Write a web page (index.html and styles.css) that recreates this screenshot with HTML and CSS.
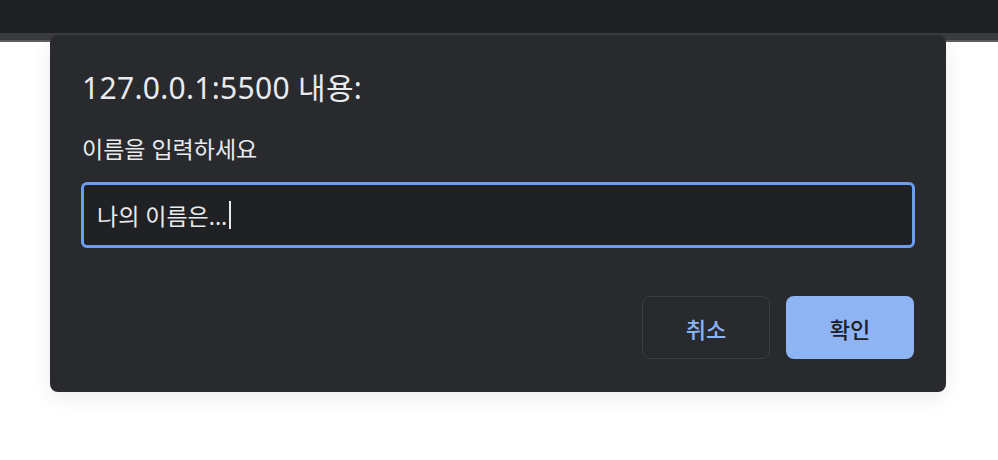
FILE: index.html
```html
<!DOCTYPE html>
<html lang="ko">
<head>
    <meta charset="utf-8">
    <title>127.0.0.1:5500</title>
    <link rel="stylesheet" href="styles.css">
</head>
<body>
    <div class="toolbar"></div>
    <div class="toolbar-edge"></div>

    <div class="dialog">
        <h2 class="dialog-title">127.0.0.1:5500 내용:</h2>
        <p class="dialog-message">이름을 입력하세요</p>
        <div class="prompt-input">나의 이름은...<span class="caret"></span></div>
        <div class="dialog-buttons">
            <button class="btn btn-cancel">취소</button>
            <button class="btn btn-ok">확인</button>
        </div>
    </div>
</body>
</html>
```

FILE: styles.css
```css
* {
    margin: 0;
    padding: 0;
    box-sizing: border-box;
}
body {
    background: #fff;
    font-family: "Noto Sans", "Noto Sans CJK KR", sans-serif;
    color: #e8eaed;
}
.toolbar {
    height: 33px;
    background: #202124;
}
.toolbar-edge {
    height: 9px;
    background: #3a3b3e;
    border-bottom: 2px solid #5c5d60;
}
.dialog {
    position: absolute;
    top: 35px;
    left: 50px;
    width: 896px;
    height: 357px;
    background: #292a2d;
    border-radius: 8px;
    padding: 36px 32px 33px 32px;
    display: flex;
    flex-direction: column;
    box-shadow: 0 6px 20px rgba(0, 0, 0, 0.08);
}
.dialog-title {
    font-size: 30px;
    font-weight: 400;
    line-height: 34px;
    letter-spacing: 0.3px;
}
.dialog-message {
    margin-top: 29px;
    font-size: 23px;
    line-height: 30px;
}
.prompt-input {
    margin: 18px -1px 0 -1px;
    height: 66px;
    border: 3px solid #6c9ef0;
    border-radius: 6px;
    background: #202124;
    padding: 0 13px;
    display: flex;
    align-items: center;
    font-size: 23px;
}
.caret {
    display: inline-block;
    width: 2px;
    height: 28px;
    margin-left: 2px;
    background: #e8eaed;
}
.dialog-buttons {
    margin-top: 48px;
    display: flex;
    justify-content: flex-end;
    gap: 16px;
}
.btn {
    width: 128px;
    height: 63px;
    border-radius: 8px;
    font-family: "Noto Sans CJK KR", sans-serif;
    font-size: 22px;
    font-weight: 500;
}
.btn-cancel {
    background: transparent;
    border: 1px solid #3c3d41;
    color: #8ab4f8;
}
.btn-ok {
    background: #8fb4f4;
    border: none;
    color: #202124;
}
```
